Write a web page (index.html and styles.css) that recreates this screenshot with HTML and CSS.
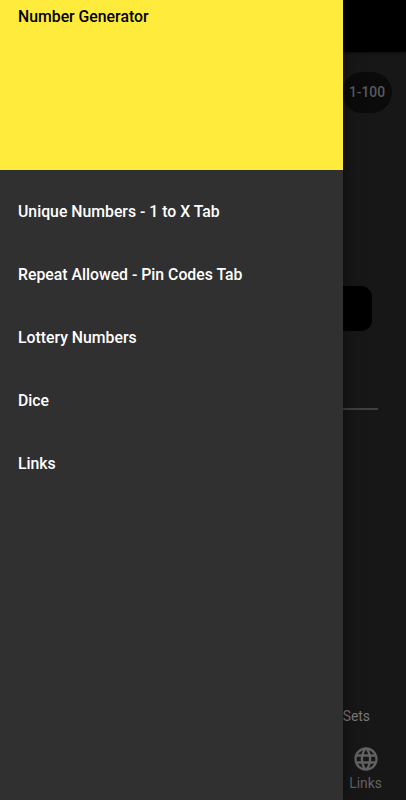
FILE: index.html
```
<!DOCTYPE html>
<html lang="en">
<head>
  <meta charset="UTF-8">
  <meta name="viewport" content="width=device-width, initial-scale=1.0">
  <title>Number Generator</title>
  <link rel="stylesheet" href="styles.css">
</head>
<body>
  <div class="page">
    <header class="app-bar"></header>
    <main class="content">
      <button class="chip">1-100</button>
      <button class="generate"></button>
      <div class="field"></div>
      <div class="sets">Sets</div>
    </main>
    <nav class="bottom-nav">
      <a class="tab">
        <svg class="globe" viewBox="0 0 24 24" fill="currentColor">
          <path d="M11.99 2C6.47 2 2 6.48 2 12s4.47 10 9.99 10C17.52 22 22 17.52 22 12S17.52 2 11.99 2zm6.93 6h-2.95c-.32-1.25-.78-2.45-1.38-3.56 1.84.63 3.37 1.91 4.33 3.56zM12 4.04c.83 1.2 1.48 2.53 1.91 3.96h-3.82c.43-1.43 1.08-2.76 1.91-3.96zM4.26 14C4.1 13.36 4 12.69 4 12s.1-1.36.26-2h3.38c-.08.66-.14 1.32-.14 2s.06 1.34.14 2H4.26zm.82 2h2.95c.32 1.25.78 2.45 1.38 3.56-1.84-.63-3.37-1.9-4.33-3.56zm2.95-8H5.08c.96-1.66 2.49-2.93 4.33-3.56C8.81 5.55 8.35 6.75 8.03 8zM12 19.96c-.83-1.2-1.48-2.53-1.91-3.96h3.82c-.43 1.43-1.08 2.76-1.91 3.96zM14.34 14H9.66c-.09-.66-.16-1.32-.16-2s.07-1.35.16-2h4.68c.09.65.16 1.32.16 2s-.07 1.34-.16 2zm.25 5.56c.6-1.11 1.06-2.31 1.38-3.56h2.95c-.96 1.65-2.49 2.93-4.33 3.56zM16.36 14c.08-.66.14-1.32.14-2s-.06-1.34-.14-2h3.38c.16.64.26 1.31.26 2s-.1 1.36-.26 2h-3.38z"/>
        </svg>
        <span>Links</span>
      </a>
    </nav>
  </div>

  <aside class="drawer">
    <div class="drawer-header">Number Generator</div>
    <ul class="menu">
      <li>Unique Numbers - 1 to X Tab</li>
      <li>Repeat Allowed - Pin Codes Tab</li>
      <li>Lottery Numbers</li>
      <li>Dice</li>
      <li>Links</li>
    </ul>
  </aside>
</body>
</html>
```

FILE: styles.css
```
* {
  box-sizing: border-box;
}

body {
  font-family: Roboto, sans-serif;
  margin: 0;
  height: 800px;
  position: relative;
  overflow: hidden;
  background: #171717;
}

/* dimmed page behind the drawer */
.page {
  height: 100%;
  display: flex;
  flex-direction: column;
  color: #7a7a7a;
}

.app-bar {
  height: 52px;
  flex-shrink: 0;
  background: #000;
  box-shadow: 0 1px 3px rgba(0, 0, 0, 0.5);
}

.content {
  flex: 1;
  display: flex;
  flex-direction: column;
  align-items: flex-end;
  padding-top: 20px;
}

button {
  border: none;
  padding: 0;
  font-family: inherit;
}

.chip {
  width: 50px;
  height: 41px;
  margin-right: 14px;
  padding-bottom: 2px;
  border-radius: 21px;
  background: #0b0b0b;
  color: #5a5a5a;
  font-size: 13.8px;
  font-weight: 500;
}

.generate {
  width: 338px;
  height: 45px;
  margin: 173px 34px 0 0;
  border-radius: 11px;
  background: #000;
}

.field {
  width: 350px;
  height: 79px;
  margin-right: 28px;
  border-bottom: 2px solid #404040;
}

.sets {
  margin: auto 36px 11px 0;
  font-size: 13.8px;
  line-height: 20px;
}

.bottom-nav {
  height: 63px;
  display: flex;
  justify-content: flex-end;
}

.tab {
  width: 81px;
  display: flex;
  flex-direction: column;
  align-items: center;
  padding-top: 8px;
  font-size: 13.8px;
  line-height: 20px;
  color: #626262;
}

.globe {
  width: 28px;
  height: 28px;
}

.drawer {
  position: absolute;
  top: 0;
  left: 0;
  width: 343px;
  height: 100%;
  background: #303030;
  box-shadow: 0 0 16px rgba(0, 0, 0, 0.5);
  font-size: 15.8px;
  font-weight: 500;
  color: #fff;
}

.drawer-header {
  height: 170px;
  padding: 7px 18px;
  line-height: 20px;
  background: #ffeb3b;
  color: #000;
}

.menu {
  list-style: none;
  margin: 0;
  padding: 10px 18px;
}

.menu li {
  height: 63px;
  line-height: 63px;
}
```
